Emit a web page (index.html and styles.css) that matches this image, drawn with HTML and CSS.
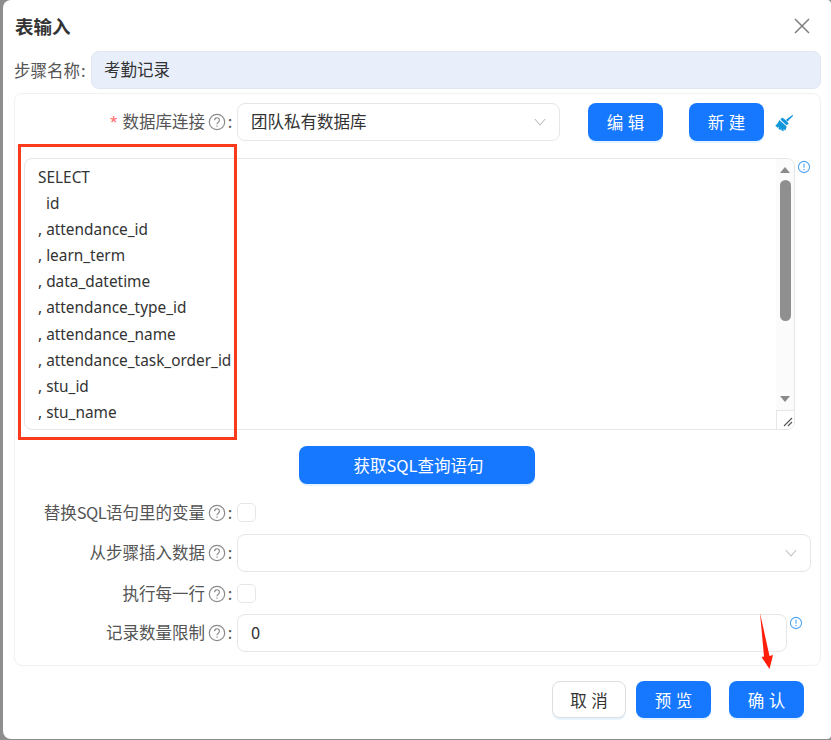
FILE: index.html
```html
<!DOCTYPE html>
<html lang="zh-CN">
<head>
<meta charset="utf-8">
<title>表输入</title>
<link rel="stylesheet" href="styles.css">
</head>
<body>
<div class="dialog">
  <header class="head">
    <h1 class="title">表输入</h1>
    <svg class="close" viewBox="0 0 16 16" width="16" height="16"><path d="M1 1 15 15M15 1 1 15" stroke="#7f7f7f" stroke-width="1.5" fill="none"/></svg>
  </header>
  <div class="name-row">
    <span class="name-label">步骤名称<span class="name-colon">:</span></span>
    <div class="name-input">考勤记录</div>
  </div>
  <section class="panel">
    <div class="row row-conn">
      <div class="label"><span class="req">*</span>数据库连接<svg class="q" viewBox="0 0 18 18"><circle cx="9" cy="9" r="7.7"/><path d="M6.6 7.2a2.4 2.4 0 1 1 3.7 2c-.9.6-1.3 1-1.3 2"/><path d="M9 12.600v1.200"/></svg><span class="colon">:</span></div>
      <div class="select select-conn"><span class="val">团队私有数据库</span><svg class="chev" viewBox="0 0 14 9"><path d="M1 1 7 8 13 1"/></svg></div>
      <button class="btn btn-edit">编 辑</button>
      <button class="btn btn-new">新 建</button>
      <svg class="brush" viewBox="0 0 20 20"><path d="M19.700.8 12.200 6.400l1.700 1.900 6-6z" fill="#1296db"/><path d="M8.200 3.800c2 1.200 5.800 4.600 7 7l-2.500 1.700L6 6z" fill="#1296db"/><path d="M4.800 6.800l8.200 7c-.3 1.700-1 3.300-1.900 4.500l-1.700-1.500.3 2.500-2.500-1.100-.4-2-1 1.800-2-1.800.5-2-1.800 1.100L.3 12.600c2.200-.9 3.600-3.300 4.500-5.800z" fill="#1296db"/></svg>
    </div>
    <div class="sql-row">
      <div class="sql-box">
        <div class="sql-text">SELECT
  id
, attendance_id
, learn_term
, data_datetime
, attendance_type_id
, attendance_name
, attendance_task_order_id
, stu_id
, stu_name</div>
        <div class="scroll">
          <i class="arr-up"></i>
          <div class="track"><div class="thumb"></div></div>
          <i class="arr-down"></i>
          <div class="grip"><svg viewBox="0 0 10 10" width="10" height="10"><path d="M1 9 9 1M5 9 9 5" stroke="#555" stroke-width="1.100" fill="none"/></svg></div>
        </div>
      </div>
      <svg class="info" viewBox="0 0 14 14"><circle cx="7" cy="7" r="5.600"/><path d="M7 3.800v3.900M7 9v1.200"/></svg>
    </div>
    <div class="get-row"><button class="btn btn-sql">获取SQL查询语句</button></div>
    <div class="row row-check">
      <div class="label">替换<span class="latin">SQL</span>语句里的变量<svg class="q" viewBox="0 0 18 18"><circle cx="9" cy="9" r="7.7"/><path d="M6.6 7.2a2.4 2.4 0 1 1 3.7 2c-.9.6-1.3 1-1.3 2"/><path d="M9 12.600v1.200"/></svg><span class="colon">:</span></div>
      <span class="check"></span>
    </div>
    <div class="row row-step">
      <div class="label">从步骤插入数据<svg class="q" viewBox="0 0 18 18"><circle cx="9" cy="9" r="7.7"/><path d="M6.6 7.2a2.4 2.4 0 1 1 3.7 2c-.9.6-1.3 1-1.3 2"/><path d="M9 12.600v1.200"/></svg><span class="colon">:</span></div>
      <div class="select select-step"><svg class="chev" viewBox="0 0 14 9"><path d="M1 1 7 8 13 1"/></svg></div>
    </div>
    <div class="row row-each">
      <div class="label">执行每一行<svg class="q" viewBox="0 0 18 18"><circle cx="9" cy="9" r="7.7"/><path d="M6.6 7.2a2.4 2.4 0 1 1 3.7 2c-.9.6-1.3 1-1.3 2"/><path d="M9 12.600v1.200"/></svg><span class="colon">:</span></div>
      <span class="check"></span>
    </div>
    <div class="row row-limit">
      <div class="label">记录数量限制<svg class="q" viewBox="0 0 18 18"><circle cx="9" cy="9" r="7.7"/><path d="M6.6 7.2a2.4 2.4 0 1 1 3.7 2c-.9.6-1.3 1-1.3 2"/><path d="M9 12.600v1.200"/></svg><span class="colon">:</span></div>
      <div class="select select-limit"><span class="val">0</span></div>
      <svg class="info info-limit" viewBox="0 0 14 14"><circle cx="7" cy="7" r="5.600"/><path d="M7 3.800v3.900M7 9v1.200"/></svg>
    </div>
  </section>
  <footer class="foot">
    <button class="btn btn-plain">取 消</button>
    <button class="btn btn-preview">预 览</button>
    <button class="btn btn-ok">确 认</button>
  </footer>
</div>
<div class="mark-box"></div>
<svg class="mark-arrow" viewBox="0 0 20 64" width="20" height="64"><path d="M2 1 11.500 44 15 43 11.500 57 3.500 45 6 44.500z" fill="#ff1e0a"/></svg>
</body>
</html>
```

FILE: styles.css
```css
* { box-sizing: border-box; }
html, body { margin: 0; padding: 0; }
body {
  width: 831px;
  height: 740px;
  background: #8e8e8e;
  overflow: hidden;
  position: relative;
  font-family: "Noto Sans CJK SC", "Noto Sans", sans-serif;
  font-size: 16.5px;
  color: #333;
}
.dialog {
  margin-left: 3px;
  width: 828px;
  height: 739px;
  background: #fff;
  border-radius: 8px 4px 4px 8px;
  padding: 0 10px 0 11px;
}
.head {
  height: 51px;
  display: flex;
  align-items: center;
  justify-content: space-between;
  padding: 1px 11px 0 1px;
}
.title { margin: 0; font-size: 18.5px; font-weight: 700; color: #333; }
.close { display: block; }
.name-row { display: flex; align-items: center; height: 38px; }
.name-label { width: 77px; color: #555; white-space: nowrap; }
.name-colon { margin-left: 1px; }
.name-input {
  flex: 1;
  height: 38px;
  line-height: 35px;
  background: #e8effb;
  border: 1px solid #dfe6f2;
  border-radius: 8px;
  padding-left: 12px;
  color: #333;
}
.panel {
  margin-top: 4px;
  height: 573px;
  border: 1px solid #f1f1f1;
  border-radius: 8px;
  padding: 9px 9px 0;
}
.row { display: flex; align-items: center; }
.label {
  width: 213px;
  height: 38px;
  padding-bottom: 3px;
  display: flex;
  align-items: center;
  justify-content: flex-end;
  color: #555;
  white-space: nowrap;
}
.latin { letter-spacing: -.6px; }
.req { color: #ff6b6b; margin-right: 5px; font-size: 19px; line-height: 1; padding-top: 3px; font-family: "Liberation Sans", sans-serif; }
.q { width: 18px; height: 18px; margin: 2px 0 0 3px; fill: none; stroke: #8a8a8a; stroke-width: 1.200; flex: none; }
.colon { width: 8px; margin-right: 3px; text-align: center; }
.select {
  height: 38px;
  border: 1px solid #e6e6e6;
  border-radius: 8px;
  display: flex;
  align-items: center;
  justify-content: space-between;
  padding: 0 13px;
  color: #333;
  background: #fff;
}
.val { padding-bottom: 2px; }
.chev { width: 12px; height: 8px; fill: none; stroke: #bdbdbd; stroke-width: 1.200; }
.row-conn { height: 38px; }
.select-conn { width: 323px; }
.btn {
  height: 38px;
  width: 75px;
  border: 0;
  border-radius: 8px;
  background: #1677ff;
  color: #fff;
  font: inherit;
  word-spacing: 1px;
  box-shadow: 0 2px 0 rgba(5, 145, 255, .1);
  padding: 0;
}
.btn-edit { margin-left: 28px; }
.btn-new { margin-left: 26px; }
.brush { width: 18px; height: 18px; margin: 2px 0 0 11px; }
.sql-row { display: flex; margin-top: 17px; align-items: flex-start; }
.sql-box {
  width: 772px;
  height: 272px;
  border: 1px solid #e6e6e6;
  border-radius: 8px;
  display: flex;
  justify-content: space-between;
  overflow: hidden;
}
.sql-text {
  white-space: pre;
  padding: 6px 0 0 13px;
  line-height: 26.1px;
  color: #333;
  font-size: 15.4px;
  font-family: "Noto Sans", "Noto Sans CJK SC", sans-serif;
}
.scroll {
  width: 18px;
  background: #fbfbfb;
  display: flex;
  flex-direction: column;
  align-items: center;
  padding-top: 8px;
}
.arr-up { border: 5px solid transparent; border-top: 0; border-bottom: 6px solid #8a8a8a; }
.track { height: 223px; padding-top: 7px; }
.thumb { width: 11px; height: 141px; background: #8f8f8f; border-radius: 5.5px; }
.arr-down { border: 5px solid transparent; border-bottom: 0; border-top: 6px solid #8a8a8a; }
.grip {
  margin-top: 8px;
  width: 18px;
  flex: 1;
  border-top: 1px solid #e6e6e6;
  border-left: 1px solid #e6e6e6;
  background: #fff;
  display: flex;
  align-items: flex-end;
  justify-content: flex-end;
  padding: 0 1px 2px 0;
}
.grip svg { display: block; }
.info { width: 14px; height: 14px; margin: 2px 0 0 2px; fill: none; stroke: #4ea4ef; stroke-width: 1.100; flex: none; }
.get-row { display: flex; justify-content: center; margin-top: 16px; }
.btn-sql { width: 236px; margin-left: -2px; padding-left: 4px; }
.row-check { height: 19px; margin-top: 19px; }
.row-check .label, .row-each .label { padding-bottom: 1px; }
.check { width: 19px; height: 19px; border: 1px solid #e6e6e6; border-radius: 5px; background: #fff; }
.row-step { margin-top: 12px; }
.select-step { width: 574px; justify-content: flex-end; }
.row-each { height: 19px; margin-top: 12px; }
.row-limit { margin-top: 11px; align-items: flex-start; }
.select-limit { width: 550px; }
.info-limit { margin: 2px 0 0 2px; }
.foot { display: flex; justify-content: flex-end; padding: 15px 17px 0 0; }
.foot .btn { height: 37px; }
.btn-plain {
  background: #fff;
  color: #333;
  border: 1px solid #dedede;
  width: 74px;
}
.btn-preview { margin-left: 10px; }
.btn-ok { margin-left: 18px; }
.mark-box {
  position: absolute;
  left: 18px;
  top: 144px;
  width: 219px;
  height: 296px;
  border: 3px solid #fa3a1a;
}
.mark-arrow { position: absolute; left: 758px; top: 612px; }
```
